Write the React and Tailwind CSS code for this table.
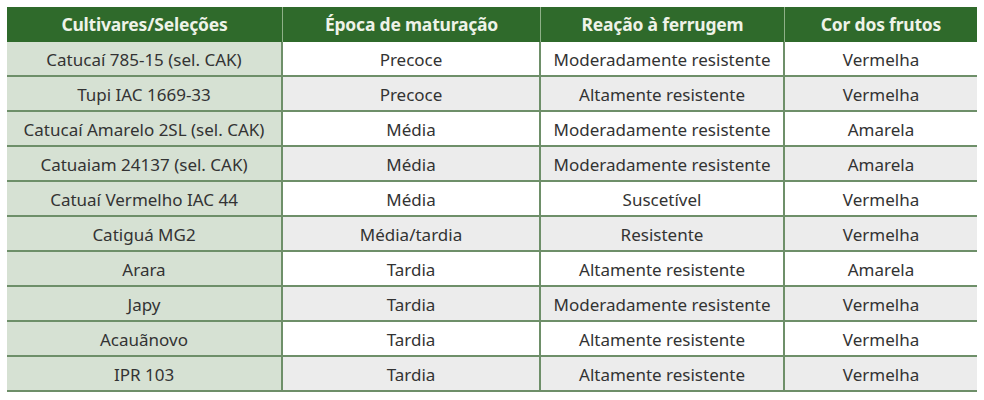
const rows = [
  ["Catucaí 785-15 (sel. CAK)", "Precoce", "Moderadamente resistente", "Vermelha"],
  ["Tupi IAC 1669-33", "Precoce", "Altamente resistente", "Vermelha"],
  ["Catucaí Amarelo 2SL (sel. CAK)", "Média", "Moderadamente resistente", "Amarela"],
  ["Catuaiam 24137 (sel. CAK)", "Média", "Moderadamente resistente", "Amarela"],
  ["Catuaí Vermelho IAC 44", "Média", "Suscetível", "Vermelha"],
  ["Catiguá MG2", "Média/tardia", "Resistente", "Vermelha"],
  ["Arara", "Tardia", "Altamente resistente", "Amarela"],
  ["Japy", "Tardia", "Moderadamente resistente", "Vermelha"],
  ["Acauãnovo", "Tardia", "Altamente resistente", "Vermelha"],
  ["IPR 103", "Tardia", "Altamente resistente", "Vermelha"],
];

const headers = ["Cultivares/Seleções", "Época de maturação", "Reação à ferrugem", "Cor dos frutos"];
const cols = "grid-cols-[276px_258px_244px_192px]";

export default function App() {
  return (
    <div className="w-[984px] h-[400px] bg-white pt-[7px] pl-[7px]" style={{ fontFamily: '"Noto Sans", "Open Sans", sans-serif' }}>
      <div className="w-[970px]">
        <div className={`grid ${cols} h-[35px] bg-[#2f6a2b]`}>
          {headers.map((h, i) => (
            <div
              key={h}
              className={`flex items-center justify-center text-[17.5px] font-bold tracking-[-0.2px] text-[#eef3e8] ${i < 3 ? "border-r border-[#8fb088]" : ""}`}
            >
              {h}
            </div>
          ))}
        </div>
        {rows.map((r, ri) => (
          <div
            key={ri}
            className={`grid ${cols} h-[35px] border-b-2 border-[#6e8f69] ${ri % 2 === 0 ? "bg-white" : "bg-[#ececec]"}`}
          >
            {r.map((c, ci) => (
              <div
                key={ci}
                className={`flex items-center justify-center pt-[2px] text-[17px] text-[#333333] ${ci === 0 ? "bg-[#d6e1d3]" : ""} ${ci < 3 ? "border-r-2 border-[#6e8f69]" : ""}`}
              >
                {c}
              </div>
            ))}
          </div>
        ))}
      </div>
    </div>
  );
}
